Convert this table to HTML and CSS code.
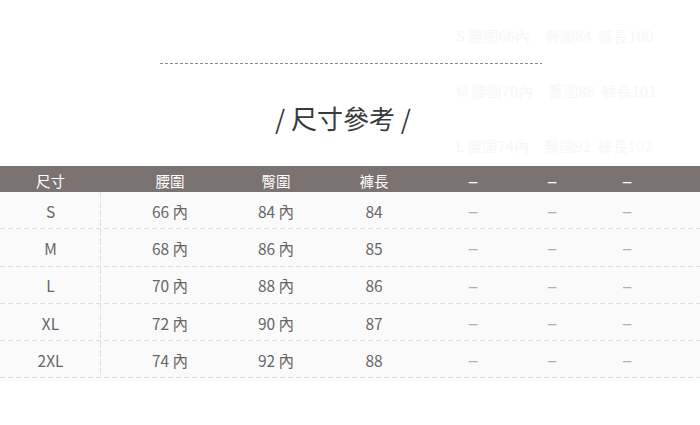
FILE: index.html
```html
<!DOCTYPE html>
<html lang="zh-Hant">
<head>
<meta charset="utf-8">
<link rel="stylesheet" href="styles.css">
</head>
<body>
<div class="page">
  <div class="ghost">
    <div>S 腰圍66內　臀圍84&nbsp;&nbsp;褲長100</div>
    <div>M 腰圍70內　臀圍88&nbsp;&nbsp;褲長101</div>
    <div>L 腰圍74內　臀圍92&nbsp;&nbsp;褲長102</div>
  </div>
  <div class="divider"></div>
  <h1 class="title">/ 尺寸參考 /</h1>
  <div class="table">
    <div class="row head">
      <div>尺寸</div><div>腰圍</div><div>臀圍</div><div>褲長</div><div class="dash">–</div><div class="dash">–</div><div class="dash">–</div><div></div>
    </div>
    <div class="row">
      <div class="first">S</div><div>66 內</div><div>84 內</div><div>84</div><div class="dash">–</div><div class="dash">–</div><div class="dash">–</div><div></div>
    </div>
    <div class="row">
      <div class="first">M</div><div>68 內</div><div>86 內</div><div>85</div><div class="dash">–</div><div class="dash">–</div><div class="dash">–</div><div></div>
    </div>
    <div class="row">
      <div class="first">L</div><div>70 內</div><div>88 內</div><div>86</div><div class="dash">–</div><div class="dash">–</div><div class="dash">–</div><div></div>
    </div>
    <div class="row">
      <div class="first">XL</div><div>72 內</div><div>90 內</div><div>87</div><div class="dash">–</div><div class="dash">–</div><div class="dash">–</div><div></div>
    </div>
    <div class="row">
      <div class="first">2XL</div><div>74 內</div><div>92 內</div><div>88</div><div class="dash">–</div><div class="dash">–</div><div class="dash">–</div><div></div>
    </div>
  </div>
</div>
</body>
</html>
```
FILE: styles.css
```css
* { box-sizing: border-box; }
html, body { margin: 0; padding: 0; background: #fff; }
body {
  font-family: "Noto Sans CJK TC", "Noto Sans", sans-serif;
  color: #666;
}
.page {
  position: relative;
  width: 700px;
  height: 425px;
  overflow: hidden;
  padding-top: 63px;
}
.ghost {
  position: absolute;
  left: 456px;
  top: 25px;
  display: flex;
  flex-direction: column;
  gap: 33px;
  font-size: 15px;
  line-height: 22px;
  color: #f7f7f7;
  white-space: nowrap;
}
.divider {
  position: relative;
  margin-left: 160px;
  width: 382px;
  height: 1px;
  background: repeating-linear-gradient(to right, #8a8a8a 0 3px, transparent 3px 5px);
}
.title {
  margin: 0;
  margin-top: 34px;
  height: 68px;
  line-height: 40px;
  font-size: 26px;
  font-weight: 400;
  color: #3a3a3a;
  text-align: center;
  position: relative;
  left: -7px;
}
.table {
  width: 700px;
}
.row {
  display: grid;
  grid-template-columns: 101px 138px 74px 122px 76px 82px 68px 1fr;
  height: 37.3px;
  background: #fafafa;
  background-image: repeating-linear-gradient(to right, #dddddd 0 5px, transparent 5px 8px);
  background-size: 100% 1px;
  background-repeat: no-repeat;
  background-position: bottom left;
  font-size: 15.5px;
  color: #666;
}
.row > div {
  display: flex;
  align-items: center;
  justify-content: center;
}
.row > .first {
  background-image: repeating-linear-gradient(to bottom, #e0e0e0 0 7px, transparent 7px 9px);
  background-size: 1px 100%;
  background-repeat: no-repeat;
  background-position: right top;
}
.row.head {
  height: 26px;
  background: #7a7371;
  color: #fff;
  font-size: 14.5px;
}
.dash { color: #b0b0b0; font-size: 19px; font-weight: 400; padding-bottom: 2px; }
.head > div { color: #fff; }
```
